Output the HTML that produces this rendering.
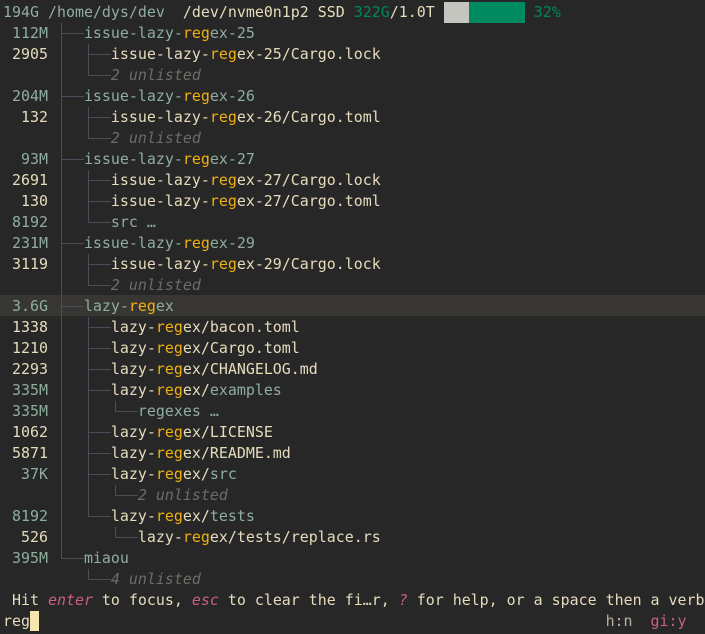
<!DOCTYPE html>
<html><head><meta charset="utf-8"><style>
html,body{margin:0;padding:0;background:#272727;width:705px;height:634px;overflow:hidden}
body{position:relative;font-family:"DejaVu Sans Mono","Liberation Mono",monospace;font-size:14.95px}
.r{position:absolute;left:3px;height:21px;line-height:21px;white-space:pre;color:#e6dcbc;width:702px}
.d{color:#8fae9f}.f{color:#e6dcbc}.h{color:#f0b010}.u{color:#6f6b66;font-style:italic}
.g{color:#00875f}.p{color:#c8607c;font-style:italic}
.v,.hz{position:absolute;background:#4c4c5a}
.v{width:1px}.hz{height:1px}
.sel{position:absolute;left:0;width:705px;height:21px;background:#383633;top:295px}
</style></head><body>
<div class="sel"></div>
<div class="r" style="top:1.5px"><span class="d">194G /home/dys/dev</span>  /dev/nvme0n1p2 SSD <span class="g">322G</span>/1.0T <span style="display:inline-block;width:25px;height:21px;background:#c5c5c0;vertical-align:top"></span><span style="display:inline-block;width:56px;height:21px;background:#008a60;vertical-align:top"></span> <span class="g">32%</span></div>
<div class="r" style="top:22.5px"><span class="d"> 112M    issue-lazy-<span class="h">reg</span>ex-25</span></div>
<div class="r" style="top:43.5px"> 2905       issue-lazy-<span class="h">reg</span>ex-25/Cargo.lock</div>
<div class="r" style="top:64.5px">            <span class="u">2 unlisted</span></div>
<div class="r" style="top:85.5px"><span class="d"> 204M    issue-lazy-<span class="h">reg</span>ex-26</span></div>
<div class="r" style="top:106.5px">  132       issue-lazy-<span class="h">reg</span>ex-26/Cargo.toml</div>
<div class="r" style="top:127.5px">            <span class="u">2 unlisted</span></div>
<div class="r" style="top:148.5px"><span class="d">  93M    issue-lazy-<span class="h">reg</span>ex-27</span></div>
<div class="r" style="top:169.5px"> 2691       issue-lazy-<span class="h">reg</span>ex-27/Cargo.lock</div>
<div class="r" style="top:190.5px">  130       issue-lazy-<span class="h">reg</span>ex-27/Cargo.toml</div>
<div class="r" style="top:211.5px"><span class="d"> 8192       src …</span></div>
<div class="r" style="top:232.5px"><span class="d"> 231M    issue-lazy-<span class="h">reg</span>ex-29</span></div>
<div class="r" style="top:253.5px"> 3119       issue-lazy-<span class="h">reg</span>ex-29/Cargo.lock</div>
<div class="r" style="top:274.5px">            <span class="u">2 unlisted</span></div>
<div class="r" style="top:295.5px"><span class="d"> 3.6G    lazy-<span class="h">reg</span>ex</span></div>
<div class="r" style="top:316.5px"> 1338       lazy-<span class="h">reg</span>ex/bacon.toml</div>
<div class="r" style="top:337.5px"> 1210       lazy-<span class="h">reg</span>ex/Cargo.toml</div>
<div class="r" style="top:358.5px"> 2293       lazy-<span class="h">reg</span>ex/CHANGELOG.md</div>
<div class="r" style="top:379.5px"><span class="d"> 335M</span>       lazy-<span class="h">reg</span>ex/<span class="d">examples</span></div>
<div class="r" style="top:400.5px"><span class="d"> 335M          regexes …</span></div>
<div class="r" style="top:421.5px"> 1062       lazy-<span class="h">reg</span>ex/LICENSE</div>
<div class="r" style="top:442.5px"> 5871       lazy-<span class="h">reg</span>ex/README.md</div>
<div class="r" style="top:463.5px"><span class="d">  37K</span>       lazy-<span class="h">reg</span>ex/<span class="d">src</span></div>
<div class="r" style="top:484.5px">               <span class="u">2 unlisted</span></div>
<div class="r" style="top:505.5px"><span class="d"> 8192</span>       lazy-<span class="h">reg</span>ex/<span class="d">tests</span></div>
<div class="r" style="top:526.5px">  526          lazy-<span class="h">reg</span>ex/tests/replace.rs</div>
<div class="r" style="top:547.5px"><span class="d"> 395M    miaou</span></div>
<div class="r" style="top:568.5px">            <span class="u">4 unlisted</span></div>
<div class="r" style="top:589.5px"> Hit <span class="p">enter</span> to focus, <span class="p">esc</span> to clear the fi…r, <span class="p">?</span> for help, or a space then a verb</div>
<div class="r" style="top:610.5px">reg<span style="display:inline-block;width:9px;height:20px;background:#f5e6b0;vertical-align:top"></span>                                                               <span style="color:#b8b0a0">h:n</span>  <span style="color:#c8607c">gi:y</span></div>

<div class="v" style="left:61px;top:22.5px;height:536px"></div>
<div class="hz" style="left:61px;width:23px;top:33px"></div>
<div class="hz" style="left:61px;width:23px;top:96px"></div>
<div class="hz" style="left:61px;width:23px;top:159px"></div>
<div class="hz" style="left:61px;width:23px;top:243px"></div>
<div class="hz" style="left:61px;width:23px;top:306px"></div>
<div class="hz" style="left:61px;width:23px;top:558px"></div>
<div class="v" style="left:88px;top:43.5px;height:31px"></div>
<div class="hz" style="left:88px;width:23px;top:54px"></div>
<div class="hz" style="left:88px;width:23px;top:75px"></div>
<div class="v" style="left:88px;top:106.5px;height:31px"></div>
<div class="hz" style="left:88px;width:23px;top:117px"></div>
<div class="hz" style="left:88px;width:23px;top:138px"></div>
<div class="v" style="left:88px;top:169.5px;height:52px"></div>
<div class="hz" style="left:88px;width:23px;top:180px"></div>
<div class="hz" style="left:88px;width:23px;top:201px"></div>
<div class="hz" style="left:88px;width:23px;top:222px"></div>
<div class="v" style="left:88px;top:253.5px;height:31px"></div>
<div class="hz" style="left:88px;width:23px;top:264px"></div>
<div class="hz" style="left:88px;width:23px;top:285px"></div>
<div class="v" style="left:88px;top:316.5px;height:200px"></div>
<div class="hz" style="left:88px;width:23px;top:327px"></div>
<div class="hz" style="left:88px;width:23px;top:348px"></div>
<div class="hz" style="left:88px;width:23px;top:369px"></div>
<div class="hz" style="left:88px;width:23px;top:390px"></div>
<div class="hz" style="left:88px;width:23px;top:432px"></div>
<div class="hz" style="left:88px;width:23px;top:453px"></div>
<div class="hz" style="left:88px;width:23px;top:474px"></div>
<div class="hz" style="left:88px;width:23px;top:516px"></div>
<div class="v" style="left:88px;top:568.5px;height:11px"></div>
<div class="hz" style="left:88px;width:23px;top:579px"></div>
<div class="v" style="left:115px;top:400.5px;height:11px"></div>
<div class="hz" style="left:115px;width:23px;top:411px"></div>
<div class="v" style="left:115px;top:484.5px;height:11px"></div>
<div class="hz" style="left:115px;width:23px;top:495px"></div>
<div class="v" style="left:115px;top:526.5px;height:11px"></div>
<div class="hz" style="left:115px;width:23px;top:537px"></div>
</body></html>
